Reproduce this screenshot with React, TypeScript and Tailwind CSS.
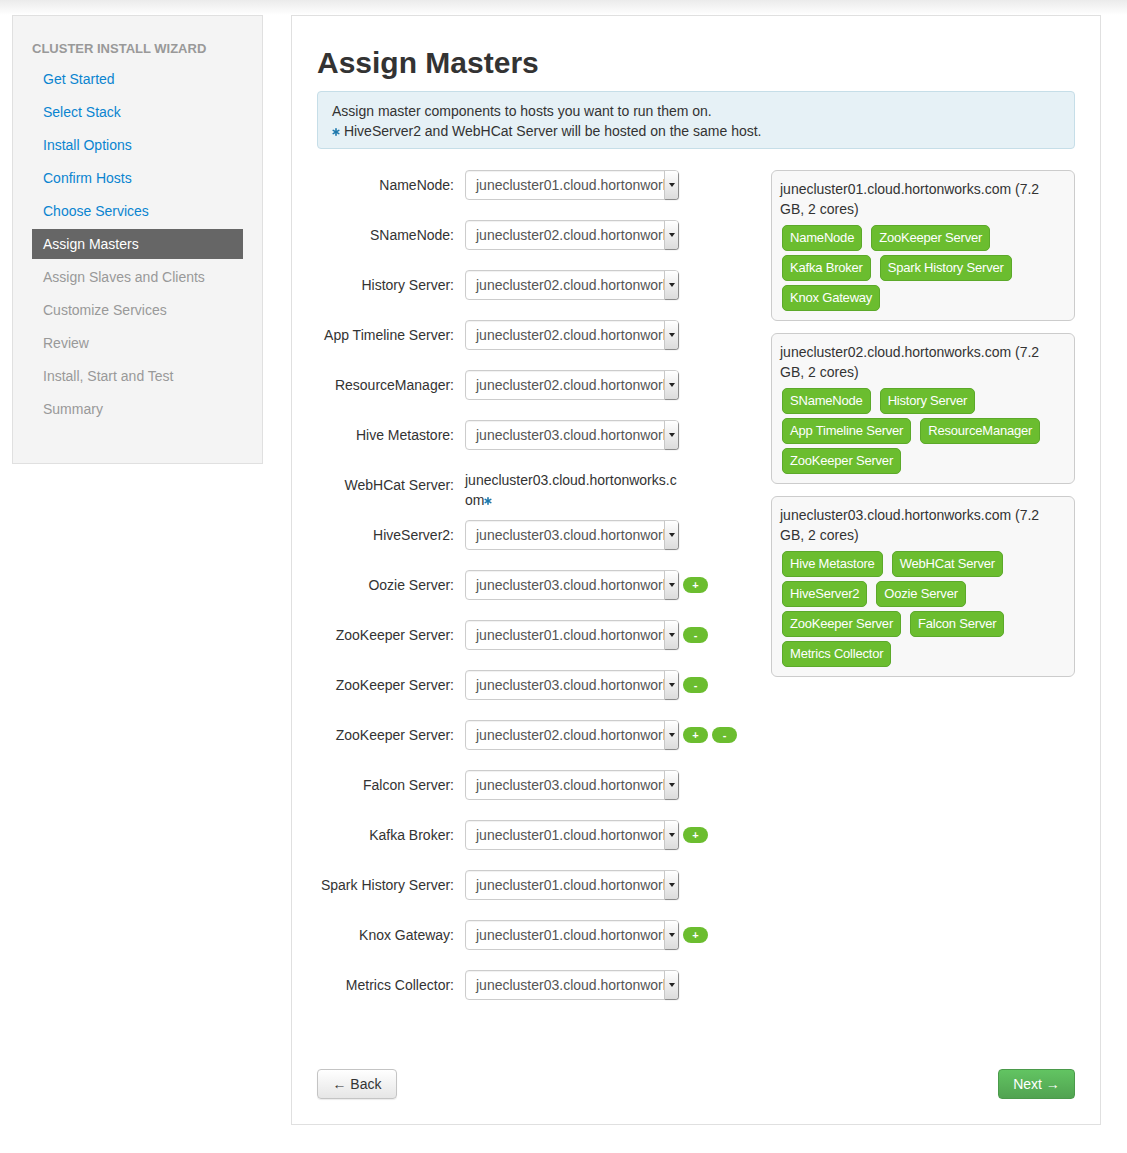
import React from 'react';

const font = { fontFamily: '"Liberation Sans", Arial, sans-serif' };

const steps = [
  { name: 'Get Started', state: 'done' },
  { name: 'Select Stack', state: 'done' },
  { name: 'Install Options', state: 'done' },
  { name: 'Confirm Hosts', state: 'done' },
  { name: 'Choose Services', state: 'done' },
  { name: 'Assign Masters', state: 'active' },
  { name: 'Assign Slaves and Clients', state: 'todo' },
  { name: 'Customize Services', state: 'todo' },
  { name: 'Review', state: 'todo' },
  { name: 'Install, Start and Test', state: 'todo' },
  { name: 'Summary', state: 'todo' },
];

const masters = [
  { label: 'NameNode', host: '01' },
  { label: 'SNameNode', host: '02' },
  { label: 'History Server', host: '02' },
  { label: 'App Timeline Server', host: '02' },
  { label: 'ResourceManager', host: '02' },
  { label: 'Hive Metastore', host: '03' },
  { label: 'WebHCat Server', host: '03', text: true },
  { label: 'HiveServer2', host: '03' },
  { label: 'Oozie Server', host: '03', add: true },
  { label: 'ZooKeeper Server', host: '01', remove: true },
  { label: 'ZooKeeper Server', host: '03', remove: true },
  { label: 'ZooKeeper Server', host: '02', add: true, remove: true },
  { label: 'Falcon Server', host: '03' },
  { label: 'Kafka Broker', host: '01', add: true },
  { label: 'Spark History Server', host: '01' },
  { label: 'Knox Gateway', host: '01', add: true },
  { label: 'Metrics Collector', host: '03' },
];

const hosts = [
  {
    name: 'junecluster01.cloud.hortonworks.com (7.2 GB, 2 cores)',
    components: ['NameNode', 'ZooKeeper Server', 'Kafka Broker', 'Spark History Server', 'Knox Gateway'],
  },
  {
    name: 'junecluster02.cloud.hortonworks.com (7.2 GB, 2 cores)',
    components: ['SNameNode', 'History Server', 'App Timeline Server', 'ResourceManager', 'ZooKeeper Server'],
  },
  {
    name: 'junecluster03.cloud.hortonworks.com (7.2 GB, 2 cores)',
    components: [
      'Hive Metastore',
      'WebHCat Server',
      'HiveServer2',
      'Oozie Server',
      'ZooKeeper Server',
      'Falcon Server',
      'Metrics Collector',
    ],
  },
];

const Asterisk = () => (
  <svg width="8" height="8" viewBox="0 0 10 10" className="inline-block align-[0px]">
    <g stroke="#1d78ad" strokeWidth="2" strokeLinecap="round">
      <line x1="5" y1="1" x2="5" y2="9" />
      <line x1="1.5" y1="3" x2="8.5" y2="7" />
      <line x1="1.5" y1="7" x2="8.5" y2="3" />
    </g>
  </svg>
);

const HostSelect = ({ host }: { host: string }) => (
  <div className="flex h-[30px] w-[214px] items-stretch rounded-[4px] border border-[#cccccc] bg-white shadow-[inset_0_1px_1px_rgba(0,0,0,0.06)]">
    <div className="flex-1 overflow-hidden whitespace-nowrap pl-[10px] pr-[5px] text-[14px] leading-[28px] text-[#555555]">
      junecluster{host}.cloud.hortonworks.com
    </div>
    <div className="flex w-[14px] items-center justify-center rounded-r-[3px] border-l border-[#c8c8c8] bg-gradient-to-b from-[#ffffff] to-[#dcdcdc] shadow-[1px_1px_1px_rgba(0,0,0,0.35)]">
      <div className="h-0 w-0 border-x-[3px] border-t-[4px] border-x-transparent border-t-[#222222]" />
    </div>
  </div>
);

const PillBtn = ({ sign }: { sign: string }) => (
  <div className="flex h-[16px] w-[25px] items-center justify-center rounded-full bg-[#6bbd2f] text-[11px] font-bold leading-none text-white">
    {sign}
  </div>
);

export default function App() {
  return (
    <div className="min-h-[1153px] bg-white text-[#333333]" style={font}>
      <div className="h-[15px] bg-gradient-to-b from-[#ebebeb] to-white" />
      <div className="flex items-start gap-[28px] pl-[12px]">
        <div className="w-[251px] border border-[#e0e0e0] bg-[#f4f4f4] px-[19px] pb-[39px] pt-[25px]">
          <div className="mb-[7px] text-[13px] font-bold leading-[16px] text-[#999999]">CLUSTER INSTALL WIZARD</div>
          <div className="flex flex-col gap-[3px]">
            {steps.map((s) => (
              <div
                key={s.name}
                className={`h-[30px] pl-[11px] text-[14px] leading-[30px] ${
                  s.state === 'active'
                    ? 'bg-[#666666] text-white'
                    : s.state === 'done'
                      ? 'text-[#0a84d0]'
                      : 'text-[#999999]'
                }`}
              >
                {s.name}
              </div>
            ))}
          </div>
        </div>

        <div className="w-[810px] border border-[#e0e0e0] bg-white px-[25px] pb-[25px] pt-[29px]">
          <h1 className="mb-[10px] text-[30px] font-bold leading-[36px] text-[#333333]">Assign Masters</h1>
          <div className="mb-[21px] rounded-[4px] border border-[#c6dee8] bg-[#e6f1f6] px-[14px] pb-[7px] pt-[9px] text-[14px] leading-[20px] text-[#333333]">
            <div>Assign master components to hosts you want to run them on.</div>
            <div>
              <Asterisk /> HiveServer2 and WebHCat Server will be hosted on the same host.
            </div>
          </div>

          <div className="flex justify-between">
            <div className="flex w-[440px] flex-col gap-[20px]">
              {masters.map((m, i) => (
                <div key={i} className="flex h-[30px] items-start">
                  <div className="w-[148px] pr-[11px] text-right text-[14px] leading-[30px] text-[#333333]">
                    {m.label}:
                  </div>
                  {m.text ? (
                    <div className="text-[14px] leading-[20px] text-[#333333]">
                      junecluster{m.host}.cloud.hortonworks.c
                      <br />
                      om
                      <Asterisk />
                    </div>
                  ) : (
                    <div className="flex h-[30px] items-center gap-[4px]">
                      <HostSelect host={m.host} />
                      {m.add && <PillBtn sign="+" />}
                      {m.remove && <PillBtn sign="-" />}
                    </div>
                  )}
                </div>
              ))}
            </div>

            <div className="flex w-[304px] flex-col gap-[12px]">
              {hosts.map((h) => (
                <div
                  key={h.name}
                  className="rounded-[6px] border border-[#cccccc] bg-[#f8f8f8] px-[8px] pb-[9px] pt-[8px]"
                >
                  <div className="text-[14px] leading-[20px] text-[#333333]">{h.name}</div>
                  <div className="mt-[6px] flex flex-wrap gap-x-[9px] gap-y-[4px] pl-[2px]">
                    {h.components.map((c) => (
                      <span
                        key={c}
                        className="h-[26px] rounded-[5px] border border-[#5ca92a] bg-[#6bbd2f] px-[7px] text-[13px] leading-[24px] tracking-[-0.2px] text-white"
                      >
                        {c}
                      </span>
                    ))}
                  </div>
                </div>
              ))}
            </div>
          </div>

          <div className="mt-[69px] flex justify-between">
            <button className="h-[30px] w-[80px] rounded-[4px] border border-[#c4c4c4] bg-gradient-to-b from-white to-[#e6e6e6] text-[14px] text-[#333333] shadow-[0_1px_1px_rgba(0,0,0,0.08)]">
              ← Back
            </button>
            <button className="h-[30px] w-[77px] rounded-[4px] border border-[#4b9a4b] bg-gradient-to-b from-[#62c462] to-[#51a351] text-[14px] text-white">
              Next →
            </button>
          </div>
        </div>
      </div>
    </div>
  );
}
